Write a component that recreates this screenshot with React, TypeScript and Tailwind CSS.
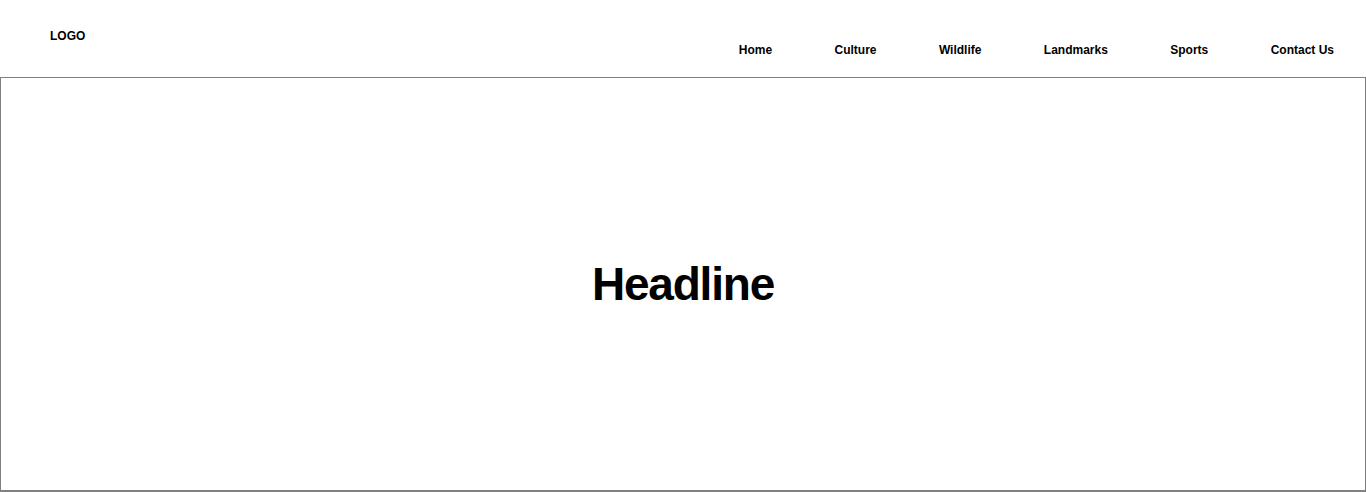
import React from "react";

export default function App() {
  const items = ["Home", "Culture", "Wildlife", "Landmarks", "Sports", "Contact Us"];
  return (
    <div className="w-[1366px] h-[492px] bg-white text-black font-['Liberation_Sans',Arial,sans-serif] overflow-hidden">
      <header className="flex justify-between h-[77px]">
        <div className="pl-[50px] pt-[29px] text-[12px] leading-[14px] font-bold">LOGO</div>
        <nav className="pt-[43px]">
          <ul className="flex gap-[62.4px] pr-[32px] text-[12px] leading-[14px] font-bold">
            {items.map((i) => (
              <li key={i}>{i}</li>
            ))}
          </ul>
        </nav>
      </header>
      <main className="h-[415px] border border-[#808080] border-b-2 flex items-center justify-center">
        <h1 className="text-[46px] font-bold tracking-[-1.2px] leading-none">Headline</h1>
      </main>
    </div>
  );
}
